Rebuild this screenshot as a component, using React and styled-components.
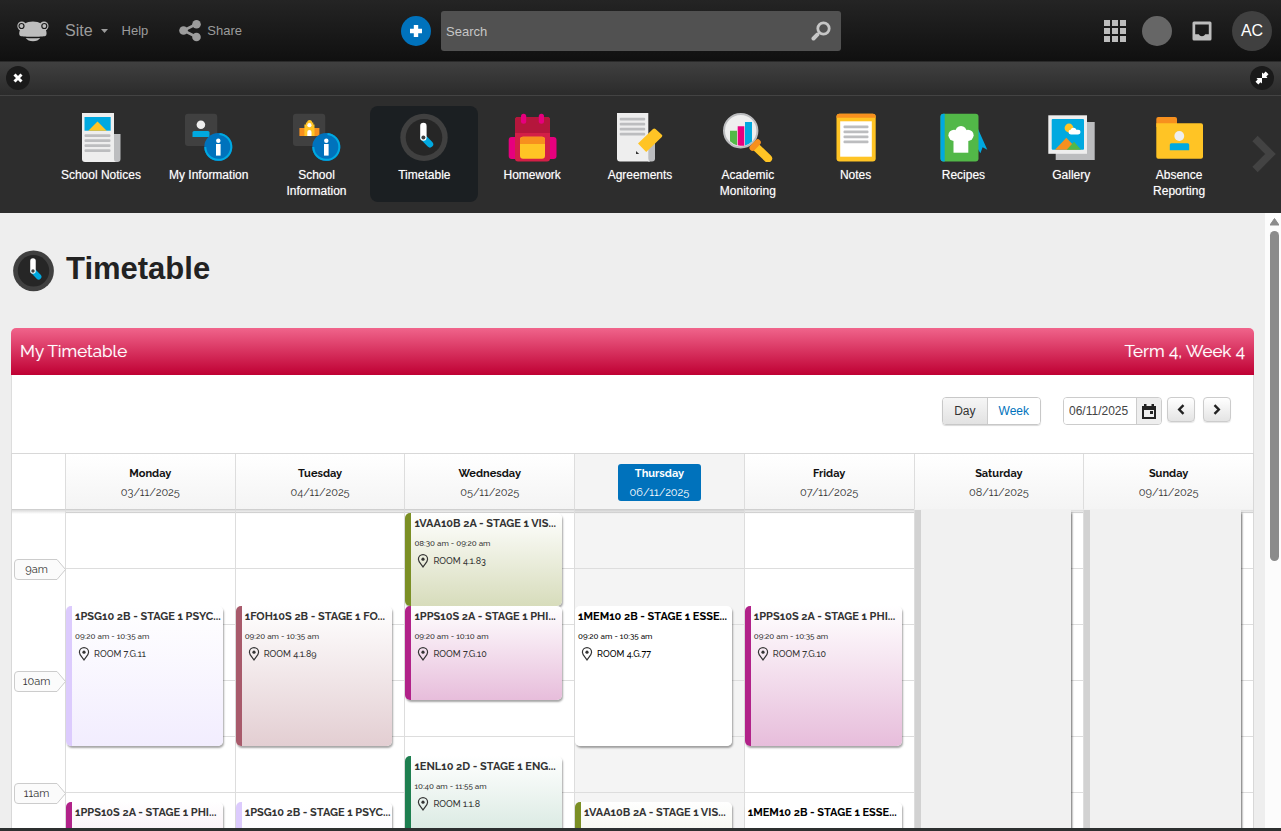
import React from "react";
import styled, { createGlobalStyle } from "styled-components";

const GlobalStyle = createGlobalStyle`
  * {
    box-sizing: border-box;
  }

  body {
    margin: 0;
    background: #2d2d2d;
    font-family: "Liberation Sans", Arial, sans-serif;
  }

  button,
  input {
    font-family: inherit;
  }

  button {
    cursor: pointer;
  }
`;

const Page = styled.div`
  height: 100vh;
  display: flex;
  flex-direction: column;
  overflow: hidden;
`;

const TopBar = styled.header`
  flex: none;
  height: 62px;
  display: flex;
  align-items: center;
  padding-right: 9px;
  background: linear-gradient(#242424, #101010);
  border-bottom: 1px solid #2a2a2a;
`;

const SiteNav = styled.nav`
  flex: 0 0 401px;
  display: flex;
  align-items: center;
  padding-left: 17px;
`;

const NavLink = styled.a`
  display: flex;
  align-items: center;
  gap: ${props => props.$gap || "0"};
  margin-left: ${props => props.$space};
  color: #9c9c9c;
  font-size: ${props => (props.$large ? "16px" : "13px")};
  text-decoration: none;
`;

const AddButton = styled.button`
  width: 30px;
  height: 30px;
  margin-right: 10px;
  padding: 0;
  display: flex;
  align-items: center;
  justify-content: center;
  border: 0;
  border-radius: 50%;
  background: #0072bc;
`;

const SearchForm = styled.form`
  flex: 0 1 400px;
  height: 40px;
  display: flex;
  align-items: center;
  border-radius: 3px;
  background: #515151;

  input {
    flex: 1;
    min-width: 0;
    height: 100%;
    padding: 2px 5px 0;
    border: 0;
    outline: none;
    background: none;
    color: #ddd;
    font-size: 13px;
  }

  input::placeholder {
    color: #c6c6c6;
    opacity: 1;
  }

  button {
    padding: 0 10px;
    border: 0;
    background: none;
    display: flex;
  }
`;

const UserTools = styled.div`
  margin-left: auto;
  display: flex;
  align-items: center;
`;

const ToolButton = styled.button`
  display: flex;
  padding: 0;
  margin-right: ${props => props.$space};
  border: 0;
  background: none;
`;

const Bubble = styled.button`
  width: 30px;
  height: 30px;
  margin-right: 20px;
  border: 0;
  border-radius: 50%;
  background: #666;
`;

const Avatar = styled.button`
  width: 40px;
  height: 40px;
  padding: 0;
  border: 0;
  border-radius: 50%;
  background: #404040;
  color: #fff;
  font-size: 16px;
`;

const Strip = styled.div`
  flex: none;
  height: 34px;
  display: flex;
  align-items: center;
  justify-content: space-between;
  padding: 0 7px 1px 6px;
  background: linear-gradient(#404040, #2b2b2b);
  border-bottom: 1px solid #434343;
`;

const StripButton = styled.button`
  width: 24px;
  height: 24px;
  padding: 0;
  display: flex;
  align-items: center;
  justify-content: center;
  border: 0;
  border-radius: 50%;
  background: #1a1a1a;
`;

const Dock = styled.nav`
  flex: none;
  height: 117px;
  display: flex;
  padding: 10px 0 11px 47px;
  background: #2d2d2d;
`;

const DockItems = styled.div`
  flex: 1;
  display: grid;
  grid-template-columns: repeat(11, 1fr);
`;

const DockItem = styled.a`
  display: flex;
  flex-direction: column;
  align-items: center;
  padding: 6px 16px 0;
  border-radius: 8px;
  background: ${props => (props.$active ? "#1b1f22" : "none")};
  color: #fff;
  font-size: 12px;
  line-height: 16px;
  text-align: center;
  text-decoration: none;
  text-shadow: 0 0 1px rgba(255, 255, 255, 0.5);

  svg {
    flex: none;
    margin-bottom: 5px;
  }

  span {
    margin: 0 -12px;
  }
`;

const DockNext = styled.button`
  width: 48px;
  padding: 0 5px 0 0;
  display: flex;
  align-items: center;
  justify-content: flex-end;
  border: 0;
  background: none;
`;

const Body = styled.div`
  flex: 1;
  min-height: 0;
  display: flex;
  overflow: hidden;
  background: #eee;
`;

const Content = styled.main`
  flex: 1;
  min-width: 0;
  padding: 36px 11px 0;
`;

const Scroller = styled.div`
  flex: 0 0 16px;
  padding: 5px 2px 0 5px;
  background: #fcfcfc;

  svg {
    display: block;
  }
`;

const Thumb = styled.div`
  width: 9px;
  height: 330px;
  margin-top: 5px;
  border-radius: 5px;
  background: #8b8b8b;
`;

const Footer = styled.footer`
  flex: none;
  height: 3px;
  background: #2d3030;
`;

const Title = styled.div`
  display: flex;
  align-items: center;
  gap: 11px;
  height: 43px;
  margin-bottom: 36px;
  padding-left: 1px;

  h1 {
    margin: 0;
    padding-bottom: 4px;
    color: #222;
    font-size: 31px;
    line-height: 38px;
  }
`;

const Card = styled.section`
  border-radius: 5px 5px 0 0;
  background: #fff;
  font-family: Raleway, "Open Sans", sans-serif;
`;

const CardHeader = styled.div`
  height: 47px;
  display: flex;
  align-items: center;
  justify-content: space-between;
  padding: 0 9px 2px;
  border-radius: 5px 5px 0 0;
  background: linear-gradient(#f0648b, #bf0033);
  color: #fff;
  font-size: 17px;
  text-shadow: 0 0 1px rgba(255, 255, 255, 0.5);

  h2 {
    margin: 0;
    font-size: inherit;
    font-weight: 400;
  }
`;

const Toolbar = styled.div`
  height: 78px;
  display: flex;
  align-items: flex-start;
  justify-content: flex-end;
  padding: 22px 22px 0;
  border: 1px solid #ddd;
  border-width: 0 1px;
  font-family: "Liberation Sans", Arial, sans-serif;
`;

const Segments = styled.div`
  display: flex;
  height: 28px;
  margin-right: 22px;
  border: 1px solid #c8c8c8;
  border-radius: 4px;
  overflow: hidden;
  box-shadow: 0 1px 1px rgba(0, 0, 0, 0.15);
`;

const Segment = styled.button`
  padding: 0 11px;
  border: 0;
  border-right: ${props => (props.$plain ? "0" : "1px solid #ccc")};
  background: ${props =>
    props.$plain ? "#fff" : "linear-gradient(#f6f6f6, #e2e2e2)"};
  color: ${props => (props.$plain ? "#0072bc" : "#333")};
  font-size: 12px;
`;

const DateBox = styled.div`
  display: flex;
  height: 28px;
  margin-right: 5px;
  border: 1px solid #ccc;
  border-radius: 4px;
  overflow: hidden;

  input {
    width: 72px;
    padding: 0 0 0 5px;
    border: 0;
    outline: none;
    color: #444;
    font-size: 12px;
  }

  button {
    width: 25px;
    padding: 0;
    display: flex;
    align-items: center;
    justify-content: center;
    border: 0;
    border-left: 1px solid #ccc;
    background: #eee;
  }
`;

const StepButton = styled.button`
  width: 28px;
  height: 25px;
  margin-left: ${props => props.$space || "0"};
  padding: 0;
  display: flex;
  align-items: center;
  justify-content: center;
  border: 1px solid #ccc;
  border-radius: 4px;
  background: linear-gradient(#fff, #e4e4e4);
  box-shadow: 0 1px 1px rgba(0, 0, 0, 0.1);
`;

const Calendar = styled.table`
  width: 100%;
  table-layout: fixed;
  border-collapse: separate;
  border-spacing: 0;
  border: 1px solid #d8d8d8;
  color: #333;

  th,
  td {
    padding: 0;
    vertical-align: top;
  }
`;

const AxisCol = styled.col`
  width: 53px;
`;

const DayHead = styled.th`
  height: 56px;
  border-left: 1px solid #ddd;
  border-bottom: 1px solid ${props => (props.$blocked ? "#f1f1f1" : "#cfcfcf")};
  background: ${props =>
    props.$today ? "#f4f4f4" : "linear-gradient(#fff, #f4f4f4)"};
  font-weight: 400;
`;

const CornerHead = styled.td`
  height: 56px;
  border-bottom: 1px solid #cfcfcf;
`;

const DayLabel = styled.div`
  width: 83px;
  height: 37px;
  margin: 10px auto 0;
  border-radius: 3px;
  background: ${props => (props.$today ? "#0072bc" : "none")};
  color: ${props => (props.$today ? "#fff" : "#333")};
  font-size: 11px;
  line-height: 19px;

  strong {
    display: block;
    color: ${props => (props.$today ? "#fff" : "#111")};
  }
`;

const DayCell = styled.td`
  border-left: 1px solid #ddd;
  background: ${props => (props.$today ? "#f4f4f4" : "#fff")};
`;

/* an extra 3px row first, then one row for each five minutes from 8:30 */
const Lane = styled.div`
  height: 451px;
  display: grid;
  grid-template-rows: 3px repeat(48, minmax(0, 1fr));
  padding-right: 12px;
  background: linear-gradient(rgba(0, 0, 0, 0.14), transparent) 0 0 / 100% 4px
      no-repeat,
    linear-gradient(#ddd, #ddd 1px, transparent 1px) 0 2px / 100% 56px;
`;

const Event = styled.article`
  grid-column: 1;
  grid-row: ${props => props.$from} / ${props => props.$to};
  min-width: 0;
  overflow: hidden;
  padding: 1px 0 0 3px;
  border-left: ${props => (props.$bar ? "6px solid " + props.$bar : "0")};
  border-radius: 5px;
  background: linear-gradient(#fff, ${props => props.$fill});
  box-shadow: 1px 2px 2px rgba(0, 0, 0, 0.35);
  color: ${props => (props.$bar ? "#333" : "#000")};

  h3,
  p {
    margin: 0;
    white-space: nowrap;
  }

  h3 {
    font-size: 11px;
    line-height: 20px;
  }
`;

const Time = styled.p`
  font-size: 8px;
  font-weight: 500;
  line-height: 18px;
`;

const Room = styled.p`
  display: flex;
  align-items: center;
  gap: 4px;
  padding-left: 3px;
  font-size: 9px;
  font-weight: 500;
  line-height: 18px;
`;

const Blocked = styled.div`
  grid-row: 1 / -1;
  border-left: 6px solid #d2d2d2;
  background: #f1f1f1;
  box-shadow: 2px 2px 2px -1px rgba(0, 0, 0, 0.6);
`;

const Axis = styled.div`
  display: flex;
  flex-direction: column;
  gap: 91px;
  padding: 49px 0 0 2px;
  background: linear-gradient(rgba(0, 0, 0, 0.14), transparent) 0 0 / 100% 4px
    no-repeat;
`;

const Hour = styled.div`
  position: relative;
  height: 21px;
  padding-right: 6px;
  color: #333;
  font-size: 11px;
  line-height: 22px;
  text-align: center;

  svg {
    position: absolute;
    top: 0;
    left: 0;
  }

  span {
    position: relative;
  }
`;

const Lines = ({ x, y, width, count }) =>
  Array.from({ length: count }, (_, i) => (
    <rect key={i} x={x} y={y + i * 5} width={width} height="2.8" rx="1" fill="#bcbdbf" />
  ));

const InfoBadge = () => (
  <g>
    <circle cx="34.3" cy="35" r="14" fill="#0072bc" />
    <path
      d="M35.5 21.9A13 13 0 1 1 21.3 35"
      fill="none"
      stroke="#00a9e0"
      strokeWidth="2"
    />
    <circle cx="34.3" cy="28.8" r="2.2" fill="#fff" />
    <rect x="32" y="32" width="4.6" height="11.6" fill="#fff" />
  </g>
);

const ClockFace = () => (
  <g>
    <circle cx="25" cy="25.4" r="23.7" fill="#404040" />
    <circle cx="25" cy="25.4" r="18.3" fill="#262626" />
    <path d="M24.4 25.5L31 32.3" stroke="#00a9e0" strokeWidth="6.4" strokeLinecap="round" />
    <path d="M24.4 14V25.5" stroke="#fff" strokeWidth="6.4" strokeLinecap="round" />
    <circle cx="24.4" cy="25.5" r="2" fill="#404040" />
  </g>
);

const art = {
  notices: (
    <g>
      <path d="M36 22h8.5v25a3 3 0 0 1-3 3H36z" fill="#bcbdbf" />
      <path d="M6 1h32v49H9a3 3 0 0 1-3-3z" fill="#eee" />
      <path d="M38 47v3h3a3 3 0 0 1-3-3z" fill="#eee" />
      <rect x="8.5" y="5" width="26.2" height="13.7" fill="#00a9e0" />
      <path d="M12.3 18.7l9.2-9.2 9.2 9.2z" fill="#ffc425" />
      <Lines x={8.5} y={22.3} width={26} count={4} />
    </g>
  ),
  me: (
    <g>
      <rect x="1" y="1.7" width="32.2" height="32.3" rx="3" fill="#404040" />
      <circle cx="16.9" cy="12.7" r="4.3" fill="#eee" />
      <path d="M8.5 25v-4.5a1.5 1.5 0 0 1 1.5-1.5h14a1.5 1.5 0 0 1 1.5 1.5V25z" fill="#00a9e0" />
      <InfoBadge />
    </g>
  ),
  school: (
    <g>
      <rect x="1" y="1.7" width="32.2" height="32.3" rx="3" fill="#404040" />
      <rect x="7.4" y="16" width="20" height="8" fill="#f7901e" />
      <path d="M12.4 24V12.500h1.500v-2h1.200a2.500 2.500 0 0 1 5 0h1.200v2h1.200V24z" fill="#ffc425" />
      <circle cx="17.4" cy="13.2" r="2.1" fill="#fff" />
      <path d="M15.3 24v-4a2.1 2.1 0 0 1 4.2 0v4z" fill="#fff" />
      <InfoBadge />
    </g>
  ),
  clock: <ClockFace />,
  homework: (
    <g>
      <rect x="1.7" y="25" width="47.8" height="22" rx="3" fill="#e6007e" />
      <rect x="8" y="5" width="35" height="44.5" rx="3" fill="#d31f47" />
      <path d="M8 21V8a3 3 0 0 1 3-3h29a3 3 0 0 1 3 3v13z" fill="#b5163c" />
      <rect x="14" y="1.7" width="5.2" height="10" rx="2.5" fill="#e6007e" />
      <rect x="31.8" y="1.7" width="5.2" height="10" rx="2.5" fill="#e6007e" />
      <rect x="13" y="24.7" width="25" height="22" rx="3" fill="#ffc425" />
      <path d="M13 32v-4.3a3 3 0 0 1 3-3h19a3 3 0 0 1 3 3V32z" fill="#f7901e" />
    </g>
  ),
  agreements: (
    <g>
      <path d="M33 25h7v21.5a3 3 0 0 1-3 3h-4z" fill="#bcbdbf" />
      <path d="M2 1h31.3v45.5a3 3 0 0 0 2 3H5a3 3 0 0 1-3-3z" fill="#eee" />
      <Lines x={4.7} y={5.7} width={25.5} count={4} />
      <path d="M21 39l3.2 3H21z" fill="#333" />
      <path d="M38 17a2 2 0 0 1 2.5 0l6.3 5.8a1.5 1.5 0 0 1 0 2.200L31.2 40 23 31.5z" fill="#ffc425" />
    </g>
  ),
  monitoring: (
    <g>
      <circle cx="17.7" cy="18.7" r="16.7" fill="#eee" stroke="#bcbdbf" strokeWidth="2" />
      <path d="M7 18.7h7v14.5a15.7 15.7 0 0 1-7-4z" fill="#52b848" />
      <path d="M14.7 14.3h6.6v19.5h-4l-2.6-.5z" fill="#e6007e" />
      <path d="M22 10h7v19.5a15.7 15.7 0 0 1-7 4z" fill="#00a9e0" />
      <path d="M33.5 35.5L45 46.500" stroke="#ffc425" strokeWidth="8.2" strokeLinecap="round" />
      <path d="M29.5 35.8L34.8 30.3" stroke="#f7901e" strokeWidth="6" strokeLinecap="round" />
    </g>
  ),
  notes: (
    <g>
      <rect x="5.5" y="1.7" width="39.2" height="47.8" rx="3" fill="#ffc425" />
      <path d="M5.5 5.7v-1a3 3 0 0 1 3-3h33.2a3 3 0 0 1 3 3v1z" fill="#f7901e" />
      <rect x="9.2" y="9.3" width="31.6" height="35.4" fill="#fff" />
      <Lines x={12.5} y={13.5} width={25} count={4} />
    </g>
  ),
  recipes: (
    <g>
      <path d="M40 17l9.3 20.7-4.7-2.5-2.2 6-2.4-4z" fill="#00a9e0" />
      <rect x="2.5" y="1.7" width="38" height="47.8" rx="3" fill="#52b848" />
      <path d="M6.7 1.7v47.8H5.5a3 3 0 0 1-3-3V4.7a3 3 0 0 1 3-3z" fill="#00a9e0" />
      <circle cx="16" cy="23.3" r="5.6" fill="#fff" />
      <circle cx="23" cy="19.8" r="5.8" fill="#fff" />
      <circle cx="30" cy="23.3" r="5.6" fill="#fff" />
      <rect x="15.5" y="22" width="14.8" height="18.7" fill="#fff" />
    </g>
  ),
  gallery: (
    <g>
      <rect x="9.7" y="10" width="39" height="38" fill="#bcbdbf" />
      <rect x="2.3" y="3.3" width="38.7" height="38.5" fill="#eee" />
      <rect x="5.7" y="7" width="32.3" height="30.7" rx="1" fill="#00a9e0" />
      <circle cx="23" cy="16" r="4.4" fill="#ffc425" />
      <rect x="22.5" y="17.8" width="12" height="4.6" rx="2.3" fill="#fff" />
      <circle cx="27.5" cy="18.5" r="2.8" fill="#fff" />
      <path d="M9 37.7l11.3-12 11.3 12z" fill="#f7901e" />
      <path d="M20.7 37.7l7.3-8 7 8z" fill="#52b848" />
    </g>
  ),
  absence: (
    <g>
      <path d="M2.3 15V7a2 2 0 0 1 2-2H21a2 2 0 0 1 2 2v8z" fill="#f7901e" />
      <path d="M2.3 11.3H47a2 2 0 0 1 2 2v31.4a2 2 0 0 1-2 2H4.3a2 2 0 0 1-2-2z" fill="#ffc425" />
      <circle cx="25.3" cy="24" r="4.9" fill="#eee" />
      <path d="M15.8 38.2v-5.4a1.5 1.5 0 0 1 1.5-1.5h16.4a1.5 1.5 0 0 1 1.5 1.5v5.4z" fill="#00a9e0" />
    </g>
  )
};

const apps = [
  { name: "School\u00a0Notices", icon: "notices" },
  { name: "My\u00a0Information", icon: "me" },
  { name: "School Information", icon: "school" },
  { name: "Timetable", icon: "clock" },
  { name: "Homework", icon: "homework" },
  { name: "Agreements", icon: "agreements" },
  { name: "Academic Monitoring", icon: "monitoring" },
  { name: "Notes", icon: "notes" },
  { name: "Recipes", icon: "recipes" },
  { name: "Gallery", icon: "gallery" },
  { name: "Absence Reporting", icon: "absence" }
];

const olive = { bar: "#7b8f25", fill: "#d7dcbb" };
const magenta = { bar: "#b12289", fill: "#e7bddb" };
const lilac = { bar: "#dccbfd", fill: "#f2edfe" };
const rose = { bar: "#a85a6b", fill: "#e3ced2" };
const green = { bar: "#1e7f50", fill: "#bbd8ca" };
const plain = { bar: "", fill: "#fff" };

const days = [
  {
    name: "Monday",
    date: "03/11/2025",
    events: [
      { title: "1PSG10 2B - STAGE 1 PSYC...", start: "09:20 am", end: "10:35 am", room: "ROOM 7.G.11", color: lilac },
      { title: "1PPS10S 2A - STAGE 1 PHI...", start: "11:05 am", end: "12:20 pm", color: magenta }
    ]
  },
  {
    name: "Tuesday",
    date: "04/11/2025",
    events: [
      { title: "1FOH10S 2B - STAGE 1 FO...", start: "09:20 am", end: "10:35 am", room: "ROOM 4.1.89", color: rose },
      { title: "1PSG10 2B - STAGE 1 PSYC...", start: "11:05 am", end: "12:20 pm", color: lilac }
    ]
  },
  {
    name: "Wednesday",
    date: "05/11/2025",
    events: [
      { title: "1VAA10B 2A - STAGE 1 VIS...", start: "08:30 am", end: "09:20 am", room: "ROOM 4.1.83", color: olive },
      { title: "1PPS10S 2A - STAGE 1 PHI...", start: "09:20 am", end: "10:10 am", room: "ROOM 7.G.10", color: magenta },
      { title: "1ENL10 2D - STAGE 1 ENG...", start: "10:40 am", end: "11:55 am", room: "ROOM 1.1.8", color: green }
    ]
  },
  {
    name: "Thursday",
    date: "06/11/2025",
    today: true,
    events: [
      { title: "1MEM10 2B - STAGE 1 ESSE...", start: "09:20 am", end: "10:35 am", room: "ROOM 4.G.77", color: plain },
      { title: "1VAA10B 2A - STAGE 1 VIS...", start: "11:05 am", end: "12:20 pm", color: olive }
    ]
  },
  {
    name: "Friday",
    date: "07/11/2025",
    events: [
      { title: "1PPS10S 2A - STAGE 1 PHI...", start: "09:20 am", end: "10:35 am", room: "ROOM 7.G.10", color: magenta },
      { title: "1MEM10 2B - STAGE 1 ESSE...", start: "11:05 am", end: "12:20 pm", color: plain }
    ]
  },
  { name: "Saturday", date: "08/11/2025", blocked: true, events: [] },
  { name: "Sunday", date: "09/11/2025", blocked: true, events: [] }
];

// grid line of a time such as "09:20 am"
const gridLine = time => {
  const [hours, minutes] = time.slice(0, 5).split(":").map(Number);
  return (hours * 60 + minutes - 510) / 5 + 2;
};

const Pin = () => (
  <svg width="12" height="14" viewBox="0 0 12 14" fill="none">
    <path
      d="M6 13C4 10 1.4 7.8 1.4 5.3a4.6 4.6 0 0 1 9.2 0C10.6 7.8 8 10 6 13z"
      stroke="#333"
      strokeWidth="1.2"
    />
    <circle cx="6" cy="5.2" r="1.6" fill="#333" />
  </svg>
);

const App = () => (
  <Page>
    <GlobalStyle />
    <TopBar>
      <SiteNav>
        <svg width="32" height="22" viewBox="0 0 32 22">
          <circle cx="4.8" cy="6" r="4.5" fill="#bdbdbd" />
          <circle cx="27" cy="6" r="4.5" fill="#bdbdbd" />
          <path
            d="M8 3.500C11 .8 20.800.8 23.800 3.500L28.800 9.500c1.200 3.500 1 5.800-.4 6.600-3 1-22 1-25 0C2 15.300 1.800 13 3 9.500z"
            fill="#bdbdbd"
          />
          <path d="M8.700 17.900c4.500.5 10 .5 14.500 0-1.200 2-4 3.300-7.200 3.300s-6-1.300-7.300-3.300z" fill="#bdbdbd" />
          <circle cx="4.500" cy="6" r="2.500" fill="#bdbdbd" stroke="#1b1b1b" strokeWidth="1.200" />
          <circle cx="27.300" cy="6" r="2.500" fill="#bdbdbd" stroke="#1b1b1b" strokeWidth="1.200" />
        </svg>
        <NavLink href="#site" $space="16px" $gap="8px" $large>
          Site
          <svg width="7" height="4" viewBox="0 0 7 4">
            <path d="M0 0h7L3.500 4z" fill="#9c9c9c" />
          </svg>
        </NavLink>
        <NavLink href="#help" $space="14px">
          Help
        </NavLink>
        <NavLink href="#share" $space="31px" $gap="6px">
          <svg width="22" height="22" viewBox="0 0 22 22">
            <path d="M17.500 4L4.500 10.500l13 6.500" fill="none" stroke="#9c9c9c" strokeWidth="2.600" />
            <circle cx="17.500" cy="4.300" r="4.300" fill="#9c9c9c" />
            <circle cx="4.500" cy="10.500" r="4.300" fill="#9c9c9c" />
            <circle cx="17.500" cy="17" r="4.300" fill="#9c9c9c" />
          </svg>
          Share
        </NavLink>
      </SiteNav>
      <AddButton aria-label="Add">
        <svg width="14" height="14" viewBox="0 0 14 14">
          <path d="M7 1v12M1 7h12" stroke="#fff" strokeWidth="4.400" />
        </svg>
      </AddButton>
      <SearchForm>
        <input type="text" placeholder="Search" aria-label="Search" />
        <button type="button" aria-label="Run search">
          <svg width="20" height="20" viewBox="0 0 20 20" fill="none" stroke="#c6c6c6">
            <circle cx="12.500" cy="7.500" r="5.700" strokeWidth="2.800" />
            <path d="M8 12l-1.500 1.500" strokeWidth="2" />
            <path d="M6.300 13.700L2.500 17.500" strokeWidth="4" strokeLinecap="round" />
          </svg>
        </button>
      </SearchForm>
      <UserTools>
        <ToolButton $space="16px" aria-label="Applications">
          <svg width="22" height="22" viewBox="0 0 22 22" fill="#bdbdbd">
            {[0, 8, 16].map(y =>
              [0, 8, 16].map(x => <rect key={x + "-" + y} x={x} y={y} width="6" height="6" />)
            )}
          </svg>
        </ToolButton>
        <Bubble aria-label="Notifications" />
        <ToolButton $space="20px" aria-label="Inbox">
          <svg width="20" height="20" viewBox="0 0 20 20">
            <path
              d="M2 .5h16A1.500 1.500 0 0 1 19.500 2v16a1.500 1.500 0 0 1-1.500 1.500H2A1.500 1.500 0 0 1 .5 18V2A1.500 1.500 0 0 1 2 .5zM3.200 3.500v9.700h3.600c.6 1.200 1.800 2 3.200 2s2.600-.8 3.200-2h3.600V3.500z"
              fill="#bdbdbd"
              fillRule="evenodd"
            />
          </svg>
        </ToolButton>
        <Avatar>AC</Avatar>
      </UserTools>
    </TopBar>
    <Strip>
      <StripButton aria-label="Close">
        <svg width="10" height="10" viewBox="0 0 10 10">
          <path d="M1.500 1.500l7 7M8.500 1.500l-7 7" stroke="#fff" strokeWidth="3" />
        </svg>
      </StripButton>
      <StripButton aria-label="Collapse">
        <svg width="14" height="14" viewBox="0 0 14 14" fill="#fff">
          <path d="M7 1.500V7h5.500L11.300 5.600 13.500 3.300 10.700.5 8.500 2.700z" />
          <path d="M7 12.500V7H1.500l1.200 1.400L.5 10.700l2.800 2.800 2.200-2.200z" />
        </svg>
      </StripButton>
    </Strip>
    <Dock>
      <DockItems>
        {apps.map(app => (
          <DockItem key={app.name} href={"#" + app.icon} $active={app.icon === "clock"}>
            <svg width="50" height="50" viewBox="0 0 50 50">
              {art[app.icon]}
            </svg>
            <span>{app.name}</span>
          </DockItem>
        ))}
      </DockItems>
      <DockNext aria-label="More">
        <svg width="24" height="38" viewBox="0 0 24 38">
          <path d="M3 3.500L18.500 19 3 34.500" fill="none" stroke="#434343" strokeWidth="7.500" />
        </svg>
      </DockNext>
    </Dock>
    <Body>
      <Content>
        <Title>
          <svg width="43" height="43" viewBox="0 0 50 50">
            <ClockFace />
          </svg>
          <h1>Timetable</h1>
        </Title>
        <Card>
          <CardHeader>
            <h2>My Timetable</h2>
            <span>Term 4, Week 4</span>
          </CardHeader>
          <Toolbar>
            <Segments>
              <Segment>Day</Segment>
              <Segment $plain>Week</Segment>
            </Segments>
            <DateBox>
              <input type="text" aria-label="Date" defaultValue="06/11/2025" />
              <button aria-label="Pick a date">
                <svg width="16" height="17" viewBox="0 0 16 17">
                  <path d="M3 1h2.500v2h5V1H13v2h2v13H1V3h2z" fill="#222" />
                  <path d="M3 7h10v7H3z" fill="#eee" />
                  <path d="M9 8h3v3H9z" fill="#222" />
                </svg>
              </button>
            </DateBox>
            <StepButton aria-label="Previous week">
              <svg width="8" height="11" viewBox="0 0 8 11" fill="none" stroke="#222" strokeWidth="2.400">
                <path d="M6.500 1.200L2.200 5.500l4.300 4.300" />
              </svg>
            </StepButton>
            <StepButton $space="8px" aria-label="Next week">
              <svg width="8" height="11" viewBox="0 0 8 11" fill="none" stroke="#222" strokeWidth="2.400">
                <path d="M1.500 1.200l4.300 4.300-4.300 4.300" />
              </svg>
            </StepButton>
          </Toolbar>
          <Calendar>
            <colgroup>
              <AxisCol />
              {days.map(day => (
                <col key={day.name} />
              ))}
            </colgroup>
            <thead>
              <tr>
                <CornerHead />
                {days.map(day => (
                  <DayHead key={day.name} scope="col" $today={day.today} $blocked={day.blocked}>
                    <DayLabel $today={day.today}>
                      <strong>{day.name}</strong>
                      {day.date}
                    </DayLabel>
                  </DayHead>
                ))}
              </tr>
            </thead>
            <tbody>
              <tr>
                <td>
                  <Axis>
                    {["9am", "10am", "11am"].map(hour => (
                      <Hour key={hour}>
                        <svg width="52" height="21" viewBox="0 0 52 21">
                          <path
                            d="M4 .5H43L51.500 10.500 43 20.500H4A3.500 3.500 0 0 1 .5 17V4A3.500 3.500 0 0 1 4 .5z"
                            fill="#fbfbfb"
                            stroke="#ccc"
                          />
                        </svg>
                        <span>{hour}</span>
                      </Hour>
                    ))}
                  </Axis>
                </td>
                {days.map(day => (
                  <DayCell key={day.name} $today={day.today}>
                    <Lane>
                      {day.blocked && <Blocked />}
                      {day.events.map(event => (
                        <Event
                          key={event.start}
                          $from={gridLine(event.start)}
                          $to={gridLine(event.end)}
                          $bar={event.color.bar}
                          $fill={event.color.fill}
                        >
                          <h3>{event.title}</h3>
                          {event.room && (
                            <>
                              <Time>
                                {event.start} - {event.end}
                              </Time>
                              <Room>
                                <Pin />
                                {event.room}
                              </Room>
                            </>
                          )}
                        </Event>
                      ))}
                    </Lane>
                  </DayCell>
                ))}
              </tr>
            </tbody>
          </Calendar>
        </Card>
      </Content>
      <Scroller>
        <svg width="9" height="8" viewBox="0 0 9 8">
          <path d="M4.500 0.500L9 7H0z" fill="#8b8b8b" stroke="#8b8b8b" strokeLinejoin="round" />
        </svg>
        <Thumb />
      </Scroller>
    </Body>
    <Footer />
  </Page>
);

export default App;
